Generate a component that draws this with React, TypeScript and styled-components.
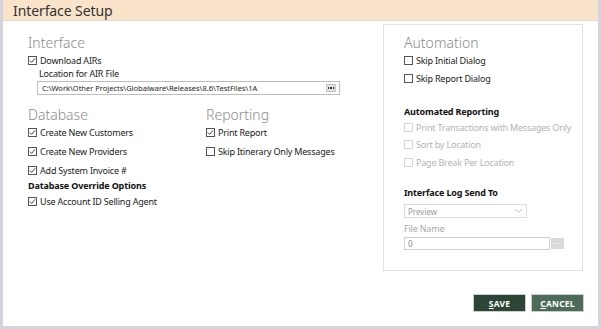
import React from "react";
import styled, { createGlobalStyle } from "styled-components";

const Global = createGlobalStyle`
  html, body { margin: 0; padding: 0; background: #fff; }
  body { font-family: "Noto Sans", "Open Sans", sans-serif; color: #222; }
  * { box-sizing: border-box; }
`;

const Window = styled.div`
  width: 601px;
  height: 329px;
  display: flex;
  flex-direction: column;
  border-left: 3px solid #d4d4dc;
  border-right: 3px solid #d4d4dc;
  border-bottom: 3px solid #d4d4dc;
  background: #fff;
`;

const Header = styled.header`
  height: 21px;
  flex: none;
  background: #f9e4cb;
  border-bottom: 1px solid #e6d8c8;
  display: flex;
  align-items: center;
  padding-left: 10px;
  font-size: 14px;
  letter-spacing: -0.1px;
  color: #333;
`;

const Body = styled.div`
  flex: 1;
  display: flex;
  min-height: 0;
`;

const LeftPane = styled.div`
  width: 380px;
  flex: none;
  padding: 13px 0 0 25px;
  display: flex;
  flex-direction: column;
`;

const RightPane = styled.section`
  width: 200px;
  height: 247px;
  margin-top: 3px;
  border: 1px solid #e2e2e2;
  padding: 9px 0 0 20px;
  display: flex;
  flex-direction: column;
`;

const SectionTitle = styled.div<{ $mt?: number }>`
  height: 18px;
  line-height: 18px;
  margin-top: ${(p) => p.$mt ?? 0}px;
  font-size: 14px;
  font-weight: 300;
  color: #8c8c8c;
`;

const CheckRow = styled.label<{ $mt?: number; $disabled?: boolean }>`
  height: 14px;
  display: flex;
  align-items: center;
  gap: 3px;
  margin-top: ${(p) => p.$mt ?? 0}px;
  font-size: 9px;
  letter-spacing: -0.2px;
  color: ${(p) => (p.$disabled ? "#b4b4b4" : "#222")};
  white-space: nowrap;
`;

const Box = styled.span<{ $disabled?: boolean }>`
  width: 9px;
  height: 9px;
  flex: none;
  border: 1px solid ${(p) => (p.$disabled ? "#d6d6d6" : "#555")};
  background: #fff;
  display: inline-flex;
  align-items: center;
  justify-content: center;
`;

const SubHead = styled.div<{ $mt?: number }>`
  height: 14px;
  line-height: 14px;
  margin-top: ${(p) => p.$mt ?? 0}px;
  font-size: 9px;
  font-weight: 700;
  letter-spacing: -0.15px;
  color: #111;
  white-space: nowrap;
`;

const FieldLabel = styled.div<{ $mt?: number; $indent?: number; $muted?: boolean }>`
  height: 12px;
  line-height: 12px;
  margin-top: ${(p) => p.$mt ?? 0}px;
  margin-left: ${(p) => p.$indent ?? 0}px;
  font-size: 9px;
  letter-spacing: -0.2px;
  color: ${(p) => (p.$muted ? "#aaa" : "#222")};
`;

const PathInput = styled.div`
  width: 303px;
  height: 14px;
  margin: 1px 0 0 9px;
  border: 1px solid #bdbdbd;
  display: flex;
  align-items: center;
  justify-content: space-between;
  padding: 0 3px 0 4px;
  font-size: 7.5px;
  color: #222;
  white-space: nowrap;
`;

const DotsButton = styled.span<{ $light?: boolean }>`
  flex: none;
  display: inline-flex;
  align-items: center;
  justify-content: center;
  gap: 1px;
  background: ${(p) => (p.$light ? "#d9d9d9" : "#e2e2e2")};
  border: 1px solid ${(p) => (p.$light ? "#d9d9d9" : "#c4c4c4")};
`;

const Dot = styled.span<{ $light?: boolean }>`
  width: 1.5px;
  height: 1.5px;
  background: ${(p) => (p.$light ? "#f4f4f4" : "#333")};
`;

const Columns = styled.div`
  display: grid;
  grid-template-columns: 178px 1fr;
  margin-top: 11px;
`;

const Column = styled.div`
  display: flex;
  flex-direction: column;
`;

const Select = styled.div`
  width: 123px;
  height: 14px;
  margin-top: 4px;
  border: 1px solid #dcdcdc;
  display: flex;
  align-items: center;
  justify-content: space-between;
  padding: 0 4px 0 3px;
  font-size: 8px;
  color: #999;
`;

const FileRow = styled.div`
  display: flex;
  align-items: center;
  gap: 1px;
  margin-top: 2px;
`;

const FileInput = styled.div`
  width: 146px;
  height: 13px;
  border: 1px solid #cfcfcf;
  display: flex;
  align-items: center;
  padding-left: 3px;
  font-size: 8px;
  color: #888;
`;

const Footer = styled.footer`
  flex: none;
  display: flex;
  justify-content: flex-end;
  gap: 5px;
  padding: 0 14px 14px 0;
`;

const ActionButton = styled.button<{ $tone: "dark" | "mid" }>`
  width: 53px;
  height: 18px;
  padding: 0;
  border: 1px solid #c9ceca;
  background: ${(p) => (p.$tone === "dark" ? "#2d4537" : "#4d6b58")};
  color: #fff;
  font-family: "Noto Sans", sans-serif;
  font-size: 8.5px;
  font-weight: 700;
  letter-spacing: 0.2px;
  display: flex;
  align-items: center;
  justify-content: center;
`;

const Mnemonic = styled.span`
  text-decoration: underline;
  text-underline-offset: 1px;
`;

const CheckMark = () => (
  <svg width="7" height="7" viewBox="0 0 7 7">
    <path d="M0.8 3.6 L2.6 5.4 L6.2 1.2" fill="none" stroke="#333" strokeWidth="0.9" />
  </svg>
);

const Check = ({
  label,
  checked,
  disabled,
  mt,
}: {
  label: string;
  checked?: boolean;
  disabled?: boolean;
  mt?: number;
}) => (
  <CheckRow $mt={mt} $disabled={disabled}>
    <Box $disabled={disabled}>{checked && <CheckMark />}</Box>
    {label}
  </CheckRow>
);

const Dots = ({ light, w, h }: { light?: boolean; w: number; h: number }) => (
  <DotsButton $light={light} style={{ width: w, height: h }}>
    <Dot $light={light} />
    <Dot $light={light} />
    <Dot $light={light} />
  </DotsButton>
);

export default function App() {
  return (
    <>
      <Global />
      <Window>
        <Header>Interface Setup</Header>
        <Body>
          <LeftPane>
            <SectionTitle>Interface</SectionTitle>
            <Check label="Download AIRs" checked mt={1} />
            <FieldLabel $mt={1} $indent={11}>
              Location for AIR File
            </FieldLabel>
            <PathInput>
              <span>C:\Work\Other Projects\Globalware\Releases\8.6\TestFiles\1A</span>
              <Dots w={10} h={8} />
            </PathInput>
            <Columns>
              <Column>
                <SectionTitle>Database</SectionTitle>
                <Check label="Create New Customers" checked mt={1} />
                <Check label="Create New Providers" checked mt={5} />
                <Check label="Add System Invoice #" checked mt={5} />
                <SubHead $mt={2}>Database Override Options</SubHead>
                <Check label="Use Account ID Selling Agent" checked mt={1} />
              </Column>
              <Column>
                <SectionTitle>Reporting</SectionTitle>
                <Check label="Print Report" checked mt={1} />
                <Check label="Skip Itinerary Only Messages" mt={5} />
              </Column>
            </Columns>
          </LeftPane>
          <RightPane>
            <SectionTitle>Automation</SectionTitle>
            <Check label="Skip Initial Dialog" mt={1} />
            <Check label="Skip Report Dialog" mt={4} />
            <SubHead $mt={20}>Automated Reporting</SubHead>
            <Check label="Print Transactions with Messages Only" disabled mt={1} />
            <Check label="Sort by Location" disabled mt={3} />
            <Check label="Page Break Per Location" disabled mt={4} />
            <SubHead $mt={17}>Interface Log Send To</SubHead>
            <Select>
              <span>Preview</span>
              <svg width="7" height="4" viewBox="0 0 7 4">
                <path d="M0.5 0.5 L3.5 3.3 L6.5 0.5" fill="none" stroke="#aaa" strokeWidth="0.8" />
              </svg>
            </Select>
            <FieldLabel $mt={5} $muted>
              File Name
            </FieldLabel>
            <FileRow>
              <FileInput>0</FileInput>
              <Dots light w={13} h={11} />
            </FileRow>
          </RightPane>
        </Body>
        <Footer>
          <ActionButton $tone="dark">
            <Mnemonic>S</Mnemonic>AVE
          </ActionButton>
          <ActionButton $tone="mid">
            <Mnemonic>C</Mnemonic>ANCEL
          </ActionButton>
        </Footer>
      </Window>
    </>
  );
}
